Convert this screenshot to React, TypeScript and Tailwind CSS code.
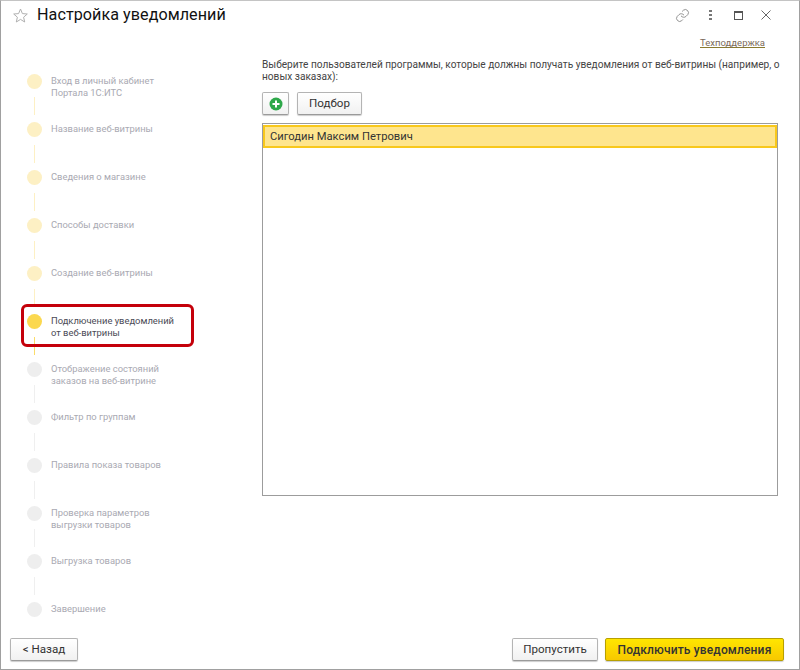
import React from "react";

const steps: { label: string[]; state: "done" | "active" | "todo"; lineClass: string }[] = [
  { label: ["Вход в личный кабинет", "Портала 1С:ИТС"], state: "done", lineClass: "bg-[#fdf0c4]" },
  { label: ["Название веб-витрины"], state: "done", lineClass: "bg-[#fdf0c4]" },
  { label: ["Сведения о магазине"], state: "done", lineClass: "bg-[#fdf0c4]" },
  { label: ["Способы доставки"], state: "done", lineClass: "bg-[#fdf0c4]" },
  { label: ["Создание веб-витрины"], state: "done", lineClass: "bg-[#fdf0c4]" },
  { label: ["Подключение уведомлений", "от веб-витрины"], state: "active", lineClass: "bg-[#fbdc6a]" },
  { label: ["Отображение состояний", "заказов на веб-витрине"], state: "todo", lineClass: "bg-[#efefef]" },
  { label: ["Фильтр по группам"], state: "todo", lineClass: "bg-[#efefef]" },
  { label: ["Правила показа товаров"], state: "todo", lineClass: "bg-[#efefef]" },
  { label: ["Проверка параметров", "выгрузки товаров"], state: "todo", lineClass: "bg-[#efefef]" },
  { label: ["Выгрузка товаров"], state: "todo", lineClass: "bg-[#efefef]" },
  { label: ["Завершение"], state: "todo", lineClass: "" },
];

const btn =
  "h-[23px] flex items-center justify-center rounded-[2px] border border-[#b4b4b4] border-b-[#9a9a9a] bg-gradient-to-b from-white to-[#f1f1f1] shadow-[0_1px_1px_rgba(0,0,0,0.2)] text-[11.6px] text-[#333]";

function Step({ s, last }: { s: (typeof steps)[number]; last: boolean }) {
  const dot = s.state === "done" ? "bg-[#fdf0c4]" : s.state === "active" ? "bg-[#fbd84f]" : "bg-[#eeeeee]";
  const text = s.state === "active" ? "text-[#4a4a55]" : "text-[#a9a9b2]";
  return (
    <div className="relative flex h-[48px] gap-[9px]">
      {s.state === "active" && (
        <div className="absolute left-[-6px] top-[-10px] w-[173px] h-[43px] rounded-[6px] border-[3px] border-[#c4000a]" />
      )}
      <div className="flex flex-col items-center w-[15px] shrink-0">
        <div className={`w-[15px] h-[15px] rounded-full ${dot}`} />
        {!last && <div className={`w-px h-[18px] mt-[8px] ${s.lineClass}`} />}
      </div>
      <div className={`text-[9.4px] leading-[12px] pt-[1px] ${text}`}>
        {s.label.map((l) => (
          <div key={l}>{l}</div>
        ))}
      </div>
    </div>
  );
}

export default function App() {
  return (
    <div className="w-[800px] h-[670px] border border-[#a0a0a0] border-t-[#c4c4c4] bg-white flex flex-col font-['Roboto','Liberation_Sans',sans-serif] overflow-hidden">
      <div className="h-[28px] flex items-center shrink-0">
        <svg className="ml-[12px] mr-[9px]" width="15" height="15" viewBox="0 0 15 15" fill="none" stroke="#b0b0b0" strokeWidth="1">
          <path d="M7.5 1 9.4 5.6 14.3 6 10.6 9.2 11.7 14 7.5 11.4 3.3 14 4.4 9.2 .7 6 5.6 5.6Z" />
        </svg>
        <div className="text-[16.15px] leading-[20px] text-[#111] tracking-[0.05px]">Настройка уведомлений</div>
        <div className="ml-auto flex items-center mr-[28px]">
          <svg className="mr-[19px]" width="15" height="15" viewBox="0 0 24 24" fill="none" stroke="#8a8a8a" strokeWidth="1.5" strokeLinecap="round" strokeLinejoin="round">
            <path d="M10 13a5 5 0 0 0 7.5.5l3-3a5 5 0 0 0-7-7l-1.7 1.7" />
            <path d="M14 11a5 5 0 0 0-7.5-.5l-3 3a5 5 0 0 0 7 7l1.7-1.7" />
          </svg>
          <div className="flex flex-col gap-[1.5px] mr-[22px]">
            <div className="w-[3px] h-[2.5px] bg-[#777]" />
            <div className="w-[3px] h-[2.5px] bg-[#777]" />
            <div className="w-[3px] h-[2.5px] bg-[#777]" />
          </div>
          <div className="w-[9px] h-[9px] border border-[#555] border-t-2 mr-[18px]" />
          <svg width="10" height="10" viewBox="0 0 10 10" stroke="#666" strokeWidth="1" fill="none">
            <path d="M.5.5l9 9M9.5.5l-9 9" />
          </svg>
        </div>
      </div>

      <div className="h-[12px] flex justify-end pr-[34px] mt-[8px] shrink-0">
        <span className="text-[9.5px] leading-[11px] text-[#7a6a5a] border-b border-[#8a7a30] h-[11px]">Техподдержка</span>
      </div>

      <div className="flex flex-1 min-h-0">
        <div className="w-[261px] shrink-0 pl-[26px] pt-[25px]">
          {steps.map((s, i) => (
            <Step key={i} s={s} last={i === steps.length - 1} />
          ))}
        </div>
        <div className="flex-1 min-w-0 flex flex-col pt-[10px] pr-[21px] pb-[0px]">
          <div className="text-[10.12px] leading-[12px] text-[#444] h-[24px] whitespace-nowrap">
            Выберите пользователей программы, которые должны получать уведомления от веб-витрины (например, о
            <br />
            новых заказах):
          </div>
          <div className="flex gap-[8px] mt-[9px]">
            <div className={`${btn} w-[27px]`}>
              <svg width="14" height="14" viewBox="0 0 14 14">
                <circle cx="7" cy="7" r="6.5" fill="#2ea84a" />
                <path d="M7 3.5v7M3.5 7h7" stroke="#fff" strokeWidth="2" />
              </svg>
            </div>
            <div className={`${btn} w-[65px]`}>Подбор</div>
          </div>
          <div className="mt-[8px] h-[373px] border border-[#9c9c9c] pt-[1px]">
            <div className="h-[23px] bg-[#fee58e] border-2 border-[#f8c81c] flex items-center pl-[5px] pt-[1px] text-[11.2px] text-[#333]">
              Сигодин Максим Петрович
            </div>
          </div>
        </div>
      </div>

      <div className="h-[31px] shrink-0 flex pl-[9px] pr-[15px]">
        <div className={`${btn} w-[68px]`}>&lt; Назад</div>
        <div className={`${btn} w-[86px] ml-auto`}>Пропустить</div>
        <div className="ml-[7px] w-[179px] h-[23px] flex items-center justify-center rounded-[2px] border border-[#b8a000] bg-gradient-to-b from-[#ffe600] to-[#f7c800] shadow-[0_1px_1px_rgba(0,0,0,0.2)] text-[12px] font-medium text-[#333] tracking-[0.15px]">
          Подключить уведомления
        </div>
      </div>
    </div>
  );
}
